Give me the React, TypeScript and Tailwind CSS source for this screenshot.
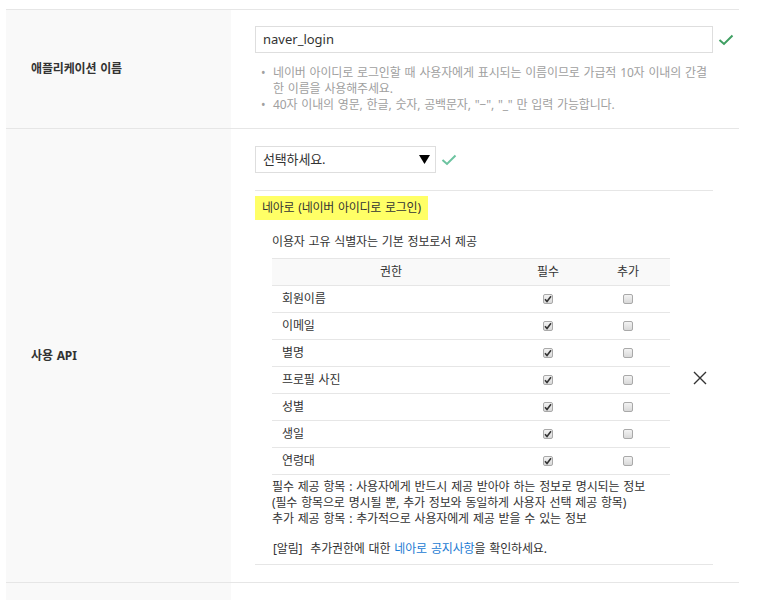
import React from "react";

const font = { fontFamily: '"Noto Sans", "Noto Sans CJK KR", sans-serif' };

function Check({ color }: { color: string }) {
  return (
    <svg width="16" height="12" viewBox="0 0 16 12" className="shrink-0">
      <polyline points="1.5,6 6,10 14.5,1.5" fill="none" stroke={color} strokeWidth="2" />
    </svg>
  );
}

function Box({ checked }: { checked: boolean }) {
  return (
    <div className="w-[10px] h-[10px] rounded-[2px] border border-[#a9a9a9] bg-gradient-to-b from-[#f3f3f3] to-[#d9d9d9] flex items-center justify-center">
      {checked && (
        <svg width="8" height="8" viewBox="0 0 8 8">
          <polyline points="1,4.2 3,6.5 7,1.2" fill="none" stroke="#333" strokeWidth="1.6" />
        </svg>
      )}
    </div>
  );
}

const perms = ["회원이름", "이메일", "별명", "프로필 사진", "성별", "생일", "연령대"];

export default function App() {
  return (
    <div
      className="w-[773px] h-[600px] bg-white overflow-hidden text-[#333] tracking-[-0.01em] [word-spacing:1px]"
      style={font}
    >
      <div className="ml-[6px] mt-[9px] w-[733px]">
        {/* Row 1 */}
        <div className="flex border-t border-b border-[#e6e6e6]">
          <div className="w-[225px] shrink-0 bg-[#f9f9f9] flex items-center pl-[25px] text-[12px] font-bold">
            애플리케이션 이름
          </div>
          <div className="flex-1 min-w-0 pl-[24px] pr-[26px] pt-[16px] pb-[15px]">
            <div className="relative">
              <div className="h-[27px] border border-[#dedede] flex items-center pl-[7px] text-[13px] tracking-normal [word-spacing:0px]">
                naver_login
              </div>
              <div className="absolute left-[463px] top-[8px]">
                <Check color="#3f9f62" />
              </div>
            </div>
            <ul className="mt-[12px] text-[12px] leading-[16px] text-[#a0a0a0] whitespace-nowrap">
              <li className="flex">
                <span className="w-[18px] shrink-0 pl-[6px]">•</span>
                <span>
                  네이버 아이디로 로그인할 때 사용자에게 표시되는 이름이므로 가급적 10자 이내의 간결
                  <br />한 이름을 사용해주세요.
                </span>
              </li>
              <li className="flex">
                <span className="w-[18px] shrink-0 pl-[6px]">•</span>
                <span>40자 이내의 영문, 한글, 숫자, 공백문자, "−", "_" 만 입력 가능합니다.</span>
              </li>
            </ul>
          </div>
        </div>

        {/* Row 2 */}
        <div className="flex border-b border-[#e6e6e6]">
          <div className="w-[225px] shrink-0 bg-[#f9f9f9] flex items-center pl-[25px] text-[12px] font-bold">
            사용 API
          </div>
          <div className="flex-1 min-w-0 pl-[24px] pr-[26px] pt-[17px] pb-[17px]">
            <div className="flex items-center gap-[5px]">
              <div className="w-[181px] h-[27px] border border-[#dedede] flex items-center justify-between pl-[7px] pr-[5px] text-[13px]">
                <span>선택하세요.</span>
                <svg width="11" height="9" viewBox="0 0 11 9">
                  <polygon points="0,0 11,0 5.5,9" fill="#000" />
                </svg>
              </div>
              <Check color="#6cc3a0" />
            </div>
            <div className="mt-[17px] border-t border-b border-[#e6e6e6] flex items-center">
              <div className="flex-1 min-w-0">
                <div className="mt-[5px] inline-flex items-center h-[24px] px-[7px] bg-[#ffff66] text-[12px] tracking-[-0.02em]">
                  네아로 (네이버 아이디로 로그인)
                </div>
                <div className="pl-[17px]">
                  <div className="mt-[14px] text-[12px] leading-[16px]">이용자 고유 식별자는 기본 정보로서 제공</div>
                  <table className="mt-[8px] w-[398px] border-collapse text-[12px]">
                    <thead>
                      <tr className="h-[27px] bg-[#f9f9f9] border-t border-b border-[#e6e6e6]">
                        <th className="font-normal w-[238px]">권한</th>
                        <th className="font-normal w-[76px]">필수</th>
                        <th className="font-normal">추가</th>
                      </tr>
                    </thead>
                    <tbody>
                      {perms.map((p) => (
                        <tr key={p} className="h-[27px] border-b border-[#e6e6e6]">
                          <td className="pl-[10px] text-left">{p}</td>
                          <td>
                            <div className="flex justify-center">
                              <Box checked />
                            </div>
                          </td>
                          <td>
                            <div className="flex justify-center">
                              <Box checked={false} />
                            </div>
                          </td>
                        </tr>
                      ))}
                    </tbody>
                  </table>
                  <div className="mt-[4px] text-[12px] leading-[16px] whitespace-nowrap">
                    <div>필수 제공 항목 : 사용자에게 반드시 제공 받아야 하는 정보로 명시되는 정보</div>
                    <div>(필수 항목으로 명시될 뿐, 추가 정보와 동일하게 사용자 선택 제공 항목)</div>
                    <div>추가 제공 항목 : 추가적으로 사용자에게 제공 받을 수 있는 정보</div>
                    <div className="mt-[14px] pl-[1px]">
                      [알림]&nbsp; 추가권한에 대한 <span className="text-[#1a7bd3]">네아로 공지사항</span>을 확인하세요.
                    </div>
                  </div>
                  <div className="h-[7px]" />
                </div>
              </div>
              <svg width="14" height="14" viewBox="0 0 14 14" className="mr-[6px] shrink-0">
                <path d="M1 1 L13 13 M13 1 L1 13" stroke="#333" strokeWidth="1.4" />
              </svg>
            </div>
          </div>
        </div>

        {/* Row 3 */}
        <div className="flex h-[40px]">
          <div className="w-[225px] shrink-0 bg-[#f9f9f9]" />
          <div className="flex-1" />
        </div>
      </div>
    </div>
  );
}
